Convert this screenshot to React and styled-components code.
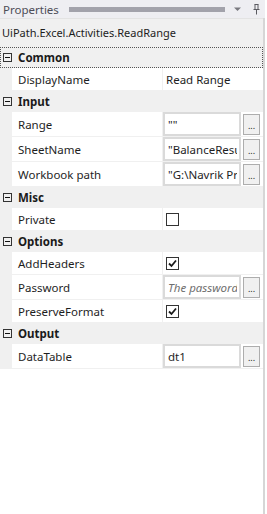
import React from 'react';
import styled, { createGlobalStyle } from 'styled-components';

const GlobalStyle = createGlobalStyle`
  html, body {
    margin: 0;
    padding: 0;
    background: #ffffff;
  }
  body {
    font-family: "Noto Sans", "Liberation Sans", sans-serif;
    font-size: 11.5px;
    color: #1e1e1e;
  }
`;

const groups = [
  {
    name: 'Common',
    focused: true,
    rows: [{ label: 'DisplayName', type: 'text', value: 'Read Range' }],
  },
  {
    name: 'Input',
    rows: [
      { label: 'Range', type: 'box', value: '""' },
      { label: 'SheetName', type: 'box', value: '"BalanceResults"' },
      { label: 'Workbook path', type: 'box', value: '"G:\\Navrik Projects\\Balance.xlsx"' },
    ],
  },
  {
    name: 'Misc',
    rows: [{ label: 'Private', type: 'check', value: false }],
  },
  {
    name: 'Options',
    rows: [
      { label: 'AddHeaders', type: 'check', value: true },
      { label: 'Password', type: 'box', value: 'The password of the workbook', hint: true },
      { label: 'PreserveFormat', type: 'check', value: true },
    ],
  },
  {
    name: 'Output',
    rows: [{ label: 'DataTable', type: 'box', value: 'dt1' }],
  },
];

export default function App() {
  return (
    <>
      <GlobalStyle />
      <Panel>
        <TitleBar>
          <Title>Properties</Title>
          <Grip />
          <svg width="9" height="6" viewBox="0 0 9 6">
            <path d="M1 1.5h7L4.5 5z" fill="#7a7a80" />
          </svg>
          <PinIcon width="9" height="12" viewBox="0 0 9 12">
            <path d="M2.5 1.5h4M3 1.5v5M6 1.5v5M1.5 6.5h6M4.5 6.5v5" stroke="#5a5a60" strokeWidth="1" fill="none" />
          </PinIcon>
        </TitleBar>
        <Subject>UiPath.Excel.Activities.ReadRange</Subject>
        <Grid>
          {groups.map((g) => (
            <React.Fragment key={g.name}>
              <Category $focused={g.focused}>
                <Toggle>
                  <svg width="9" height="9" viewBox="0 0 9 9">
                    <rect x="0.5" y="0.5" width="8" height="8" fill="none" stroke="#333" />
                    <path d="M2 4.5h5" stroke="#111" />
                  </svg>
                </Toggle>
                {g.name}
              </Category>
              {g.rows.map((r) => (
                <Row key={r.label} $tall={r.type === 'box'}>
                  <Label>{r.label}</Label>
                  <Value>
                    {r.type === 'text' && <PlainValue>{r.value}</PlainValue>}
                    {r.type === 'check' && (
                      <Check>
                        {r.value && (
                          <svg width="11" height="11" viewBox="0 0 11 11">
                            <path d="M2 5.5l2.5 2.5L9 2.5" stroke="#1a1a1a" strokeWidth="1.8" fill="none" />
                          </svg>
                        )}
                      </Check>
                    )}
                    {r.type === 'box' && (
                      <>
                        <TextBox $hint={r.hint}>
                          <BoxText>{r.value}</BoxText>
                        </TextBox>
                        <Ellipsis>...</Ellipsis>
                      </>
                    )}
                  </Value>
                </Row>
              ))}
            </React.Fragment>
          ))}
        </Grid>
      </Panel>
    </>
  );
}

const Panel = styled.div`
  width: 263px;
  height: 514px;
  border-right: 2px solid #d6d6d6;
  background: #ffffff;
  display: flex;
  flex-direction: column;
`;

const TitleBar = styled.div`
  height: 18px;
  background: #eeeef2;
  display: flex;
  align-items: center;
  padding: 0 4px 0 3px;
  gap: 6px;
  margin-right: -2px;
`;

const Title = styled.span`
  color: #4d4d57;
  font-size: 11.5px;
`;

const Grip = styled.div`
  flex: 1;
  height: 5px;
  margin: 0 2px 0 4px;
  background-image: radial-gradient(circle, #a0a0a8 0.7px, transparent 0.9px);
  background-size: 2px 2px;
  background-position: 0 0;
`;

const PinIcon = styled.svg`
  margin-left: 4px;
`;

const Subject = styled.div`
  height: 27px;
  background: #f0f0f0;
  border-top: 1px solid #e3e3e3;
  display: flex;
  align-items: center;
  padding-left: 2px;
  font-size: 11px;
  white-space: nowrap;
`;

const Grid = styled.div`
  background: #f0f0f0;
  padding-top: 1px;
  display: flex;
  flex-direction: column;
`;

const Category = styled.div`
  height: 21px;
  box-sizing: border-box;
  display: flex;
  align-items: center;
  font-weight: 700;
  color: #1a1a1a;
  border: 1px dotted ${(p) => (p.$focused ? '#555' : 'transparent')};
`;

const Toggle = styled.span`
  width: 15px;
  display: flex;
  padding-left: 2px;
`;

const Row = styled.div`
  height: ${(p) => (p.$tall ? '24px' : '22px')};
  margin-left: 12px;
  margin-bottom: 1px;
  display: flex;
  gap: 1px;
`;

const Label = styled.div`
  width: 150px;
  background: #ffffff;
  padding-left: 6px;
  box-sizing: border-box;
  display: flex;
  align-items: center;
  white-space: nowrap;
  overflow: hidden;
`;

const Value = styled.div`
  flex: 1;
  background: #ffffff;
  display: flex;
  align-items: center;
  gap: 2px;
  padding-right: 3px;
  min-width: 0;
`;

const PlainValue = styled.span`
  padding-left: 3px;
  white-space: nowrap;
`;

const Check = styled.span`
  width: 13px;
  height: 13px;
  box-sizing: border-box;
  border: 1px solid #333;
  margin-left: 3px;
  display: flex;
  align-items: center;
  justify-content: center;
  background: #fff;
`;

const TextBox = styled.div`
  width: 78px;
  height: 24px;
  box-sizing: border-box;
  border: 2px solid #dadada;
  padding: 0 2px 0 3px;
  display: flex;
  align-items: center;
  font-style: ${(p) => (p.$hint ? 'italic' : 'normal')};
  color: ${(p) => (p.$hint ? '#6e6e6e' : '#1e1e1e')};
`;

const BoxText = styled.span`
  display: block;
  flex: 1;
  min-width: 0;
  overflow: hidden;
  white-space: nowrap;
`;

const Ellipsis = styled.div`
  width: 17px;
  height: 21px;
  box-sizing: border-box;
  border: 1px solid #adadad;
  background: #f0f0f0;
  font-size: 9px;
  display: flex;
  align-items: flex-end;
  justify-content: center;
  padding-bottom: 4px;
  line-height: 1;
`;
